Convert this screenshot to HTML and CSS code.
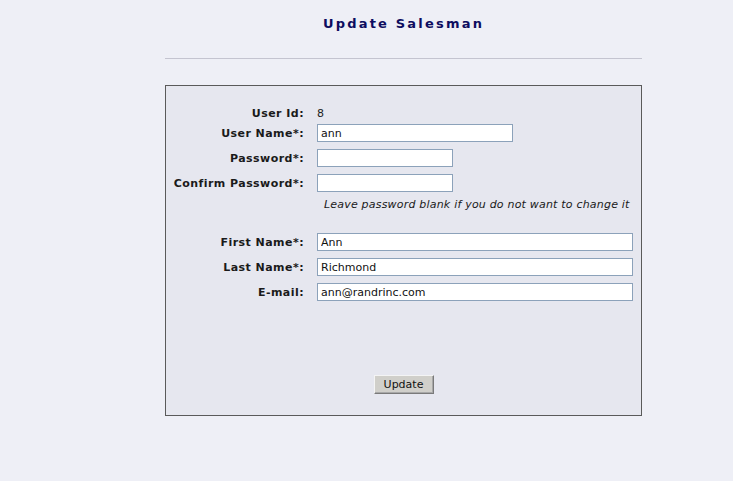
FILE: index.html
```html
<!DOCTYPE html>
<html>
<head>
<meta charset="utf-8">
<title>Update Salesman</title>
<link rel="stylesheet" href="styles.css">
</head>
<body>
<div class="page">
  <h1 class="title">Update Salesman</h1>
  <div class="rule"></div>
  <form class="box">
    <div class="row row-id">
      <span class="label">User Id:</span>
      <span class="value">8</span>
    </div>
    <div class="row row-first">
      <label class="label">User Name*:</label>
      <input class="field w196" type="text" value="ann">
    </div>
    <div class="row">
      <label class="label">Password*:</label>
      <input class="field w136" type="password" value="">
    </div>
    <div class="row">
      <label class="label">Confirm Password*:</label>
      <input class="field w136" type="password" value="">
    </div>
    <div class="note">Leave password blank if you do not want to change it</div>
    <div class="row row-after-note">
      <label class="label">First Name*:</label>
      <input class="field w316" type="text" value="Ann">
    </div>
    <div class="row">
      <label class="label">Last Name*:</label>
      <input class="field w316" type="text" value="Richmond">
    </div>
    <div class="row">
      <label class="label">E-mail:</label>
      <input class="field w316" type="text" value="ann@randrinc.com">
    </div>
    <div class="actions">
      <button class="btn" type="button">Update</button>
    </div>
  </form>
</div>
</body>
</html>
```
FILE: styles.css
```css
html, body {
  margin: 0;
  padding: 0;
  background: #eeeff6;
  font-family: "DejaVu Sans", Verdana, sans-serif;
  font-size: 11px;
  color: #111;
}
.page {
  margin-left: 165px;
  width: 477px;
}
.title {
  margin: 0;
  padding-top: 14px;
  height: 19px;
  line-height: 19px;
  text-align: center;
  font-size: 13px;
  font-weight: bold;
  letter-spacing: 2.2px;
  color: #0d0d60;
}
.rule {
  margin-top: 25px;
  height: 1px;
  background: #c4c4d0;
}
.box {
  margin: 26px 0 0 0;
  border: 1px solid #5a5a5a;
  background: #e6e7ef;
  padding-top: 18px;
  box-sizing: content-box;
  height: 311px;
}
.row {
  display: flex;
  align-items: center;
  height: 18px;
  margin-top: 7px;
}
.row-id { margin-top: 0; }
.row-first { margin-top: 2px; }
.row-after-note { margin-top: 20px; }
.label {
  width: 138px;
  text-align: right;
  font-weight: bold;
  letter-spacing: 0.45px;
  color: #1a1a1a;
  margin-right: 13px;
  white-space: nowrap;
}
.value { color: #222; }
.field {
  box-sizing: border-box;
  height: 18px;
  border: 1px solid #8ca2ba;
  background: #fff;
  padding: 0 3px;
  margin: 0;
  font-family: "DejaVu Sans", Verdana, sans-serif;
  font-size: 11px;
  color: #111;
  outline: none;
}
.w196 { width: 196px; }
.w136 { width: 136px; }
.w316 { width: 316px; }
.note {
  margin-top: 5px;
  height: 16px;
  line-height: 16px;
  padding-left: 158px;
  font-style: italic;
  letter-spacing: 0.2px;
  color: #1a1a1a;
  white-space: nowrap;
}
.actions {
  margin-top: 74px;
  display: flex;
  justify-content: center;
}
.btn {
  width: 60px;
  height: 19px;
  padding: 0;
  font-family: "DejaVu Sans", Verdana, sans-serif;
  font-size: 11px;
  color: #111;
  background: #d0cfca;
  border: 1px solid;
  border-color: #f4f4f4 #7a7a7a #7a7a7a #f4f4f4;
  box-shadow: inset -1px -1px 0 #a8a8a8;
}
```
